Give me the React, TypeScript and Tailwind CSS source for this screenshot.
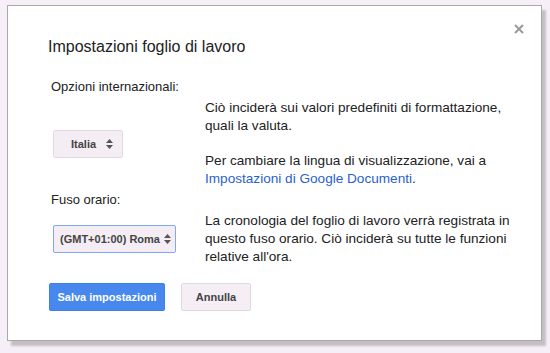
import React from 'react';

function SpinArrows() {
  return (
    <svg width="7" height="10" viewBox="0 0 7 10" className="shrink-0">
      <path d="M3.5 0 L7 4 L0 4 Z" fill="#555" />
      <path d="M0 6 L7 6 L3.5 10 Z" fill="#555" />
    </svg>
  );
}

function Select({ label, focused, width }: { label: string; focused?: boolean; width: string }) {
  return (
    <div
      className={`${width} h-[28px] flex items-center justify-between rounded-[2px] border bg-[#f4edf3] text-[11px] font-bold text-[#444] ${
        focused ? 'border-[#7fa9f5] pl-[6px] pr-[4px]' : 'border-[#e2dae0] pl-[17px] pr-[9px]'
      }`}
    >
      <span>{label}</span>
      <SpinArrows />
    </div>
  );
}

export default function App() {
  return (
    <div
      className="w-[550px] h-[353px] overflow-hidden bg-[#f7eff7] pt-[5px] pl-[7px]"
      style={{ fontFamily: '"Liberation Sans", Arial, sans-serif' }}
    >
      <div className="relative w-[535px] h-[336px] border border-[#a9a9a9] bg-white shadow-[4px_5px_2px_rgba(0,0,0,0.2)] pt-[31px] pl-[40px] text-[13px] leading-[18px] text-[#222]">
        <button className="absolute top-[17px] right-[16px] w-[12px] h-[12px] flex items-center justify-center">
          <svg width="10" height="10" viewBox="0 0 10 10">
            <path d="M1 1 L9 9 M9 1 L1 9" stroke="#9a9a9a" strokeWidth="2" />
          </svg>
        </button>

        <h1 className="text-[16px] leading-[20px] text-[#222]">Impostazioni foglio di lavoro</h1>

        <div className="mt-[21px] ml-[3px]">Opzioni internazionali:</div>
        <div className="mt-[3px] flex items-center">
          <div className="w-[157px] pl-[5px]">
            <Select label="Italia" width="w-[70px]" />
          </div>
          <div className="text-[13.6px]">
            <p>
              Ciò inciderà sui valori predefiniti di formattazione,
              <br />
              quali la valuta.
            </p>
            <p className="mt-[17px]">
              Per cambiare la lingua di visualizzazione, vai a
              <br />
              <a className="text-[#2a5fd0]">Impostazioni di Google Documenti</a>.
            </p>
          </div>
        </div>

        <div className="mt-[3px] ml-[3px]">Fuso orario:</div>
        <div className="mt-[3px] flex items-center">
          <div className="w-[157px] pl-[5px]">
            <Select label="(GMT+01:00) Roma" focused width="w-[123px]" />
          </div>
          <p className="text-[13.6px]">
            La cronologia del foglio di lavoro verrà registrata in
            <br />
            questo fuso orario. Ciò inciderà su tutte le funzioni
            <br />
            relative all'ora.
          </p>
        </div>

        <div className="mt-[17px] ml-[1px] flex gap-[16px]">
          <button className="h-[28px] w-[116px] rounded-[2px] border border-[#3d7ee8] bg-[#4788ef] text-[11px] font-bold text-white">
            Salva impostazioni
          </button>
          <button className="h-[28px] w-[70px] rounded-[2px] border border-[#e0d8df] bg-[#f5eef4] text-[11px] font-bold text-[#444]">
            Annulla
          </button>
        </div>
      </div>
    </div>
  );
}
